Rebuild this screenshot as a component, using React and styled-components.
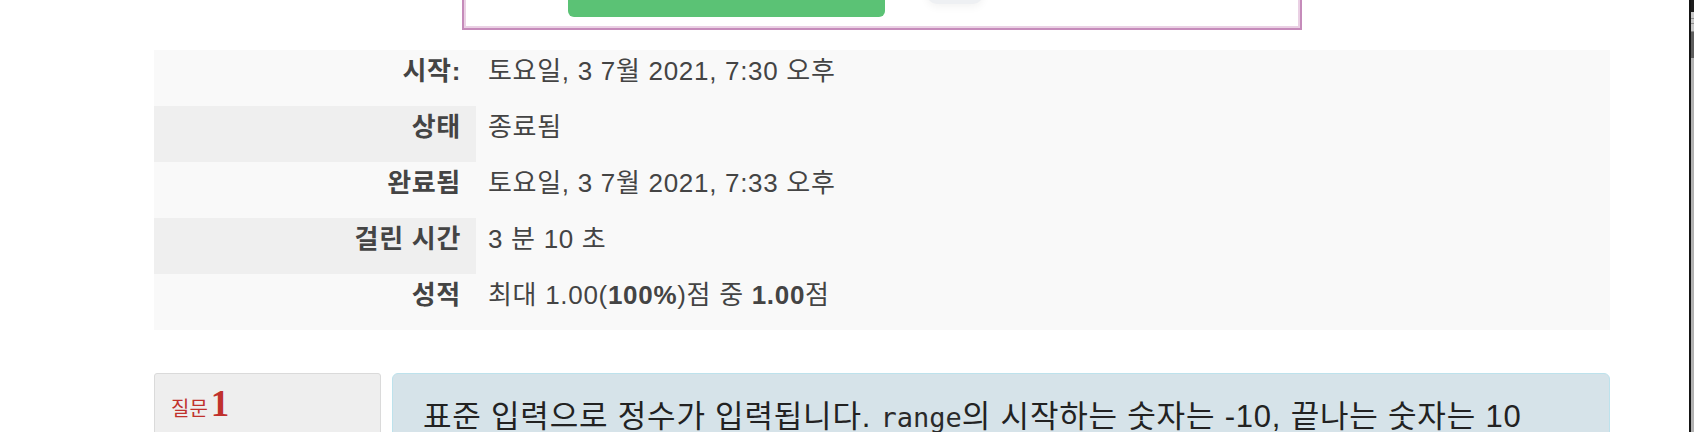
import React from "react";
import styled, { createGlobalStyle } from "styled-components";

const GlobalStyle = createGlobalStyle`
  html, body {
    margin: 0;
    padding: 0;
    background: #ffffff;
    overflow: hidden;
  }
  body {
    font-family: "Liberation Sans", "Noto Sans CJK KR", sans-serif;
    color: #444444;
  }
  * { box-sizing: border-box; }
`;

const Page = styled.div`
  display: flex;
  height: 432px;
  overflow: hidden;
`;

const Main = styled.main`
  flex: 1;
  min-width: 0;
  padding-left: 154px;
`;

const Content = styled.div`
  width: 1456px;
  display: flex;
  flex-direction: column;
`;

const ActionPanel = styled.div`
  align-self: center;
  width: 840px;
  height: 80px;
  margin-top: -50px;
  display: flex;
  align-items: flex-end;
  padding: 0 0 11px 104px;
  border: 2px solid #c58bba;
  box-shadow: inset 0 0 0 2px #ead0e4;
  background: #ffffff;
`;

const PrimaryButton = styled.div`
  width: 317px;
  height: 44px;
  border-radius: 6px;
  background: #5bc275;
`;

const GhostButton = styled.div`
  width: 56px;
  height: 44px;
  margin-left: 42px;
  margin-bottom: 13px;
  border-radius: 10px;
  background: #eef0f3;
  box-shadow: 0 3px 8px rgba(0, 0, 0, 0.05);
`;

const SummaryTable = styled.table`
  width: 1456px;
  margin-top: 20px;
  border-collapse: collapse;
  background: #f9f9f9;
  font-size: 26px;
  line-height: 33px;
  letter-spacing: 0.7px;
`;

const LabelCell = styled.th`
  width: 322px;
  padding: 5px 15px 18px 0;
  text-align: right;
  vertical-align: top;
  font-weight: bold;
  color: #444444;
  background: ${(p) => (p.$shade ? "#efefef" : "transparent")};
  white-space: nowrap;
`;

const ValueCell = styled.td`
  padding: 5px 0 18px 12px;
  vertical-align: top;
  color: #444444;
  white-space: nowrap;
`;

const Strong = styled.b`
  font-weight: bold;
`;

const QuestionRow = styled.div`
  display: flex;
  gap: 11px;
  margin-top: 43px;
  align-items: flex-start;
`;

const InfoBox = styled.div`
  width: 227px;
  height: 200px;
  flex-shrink: 0;
  padding: 11px 16px;
  border: 1px solid #dadada;
  border-radius: 3px;
  background: #eeeeee;
`;

const QuestionTitle = styled.h3`
  margin: 0;
  display: flex;
  align-items: baseline;
  line-height: 1;
  font-weight: normal;
  color: #c0312c;
`;

const TitleWord = styled.span`
  font-size: 20px;
  font-family: "Liberation Sans", "Noto Sans CJK KR", sans-serif;
`;

const TitleNumber = styled.span`
  margin-left: 3px;
  font-size: 37px;
  font-weight: bold;
  font-family: "Liberation Serif", "Noto Sans CJK KR", serif;
`;

const Formulation = styled.div`
  flex: 1;
  height: 200px;
  padding: 20px 30px;
  border: 1px solid #bde2ec;
  border-radius: 6px;
  background: #d6e3e9;
  color: #222222;
  font-size: 31px;
  line-height: 1.5;
  letter-spacing: 0.8px;
  white-space: nowrap;
`;

const Code = styled.code`
  font-family: "DejaVu Sans Mono", "Liberation Mono", monospace;
  font-size: 27px;
  letter-spacing: 0;
  color: #2a2a2a;
`;

const Scrollbar = styled.div`
  width: 5px;
  flex-shrink: 0;
  display: flex;
  flex-direction: column;
  border-left: 2px solid #151515;
  background: #b2b2b2;
`;

const ScrollPart = styled.div`
  height: ${(p) => p.$h}px;
  background: ${(p) => p.$c};
  flex-shrink: 0;
`;

const rows = [
  { label: "시작:", value: "토요일, 3 7월 2021, 7:30 오후" },
  { label: "상태", value: "종료됨" },
  { label: "완료됨", value: "토요일, 3 7월 2021, 7:33 오후" },
  { label: "걸린 시간", value: "3 분 10 초" },
  {
    label: "성적",
    value: (
      <>
        최대 1.00(<Strong>100%</Strong>)점 중 <Strong>1.00</Strong>점
      </>
    ),
  },
];

const scrollParts = [
  { h: 12, c: "#1d1d1d" },
  { h: 6, c: "#c8c8c8" },
  { h: 1, c: "#8c8c8c" },
  { h: 4, c: "#c8c8c8" },
  { h: 1, c: "#8c8c8c" },
  { h: 7, c: "#c8c8c8" },
  { h: 1, c: "#8c8c8c" },
  { h: 26, c: "#5d5d5d" },
];

export default function App() {
  return (
    <>
      <GlobalStyle />
      <Page>
        <Main>
          <Content>
            <ActionPanel>
              <PrimaryButton />
              <GhostButton />
            </ActionPanel>

            <SummaryTable>
              <tbody>
                {rows.map((r, i) => (
                  <tr key={i}>
                    <LabelCell $shade={i % 2 === 1}>{r.label}</LabelCell>
                    <ValueCell>{r.value}</ValueCell>
                  </tr>
                ))}
              </tbody>
            </SummaryTable>

            <QuestionRow>
              <InfoBox>
                <QuestionTitle>
                  <TitleWord>질문</TitleWord>
                  <TitleNumber>1</TitleNumber>
                </QuestionTitle>
              </InfoBox>
              <Formulation>
                표준 입력으로 정수가 입력됩니다. <Code>range</Code>의 시작하는 숫자는 -10, 끝나는 숫자는 10
              </Formulation>
            </QuestionRow>
          </Content>
        </Main>
        <Scrollbar>
          {scrollParts.map((p, i) => (
            <ScrollPart key={i} $h={p.h} $c={p.c} />
          ))}
        </Scrollbar>
      </Page>
    </>
  );
}
